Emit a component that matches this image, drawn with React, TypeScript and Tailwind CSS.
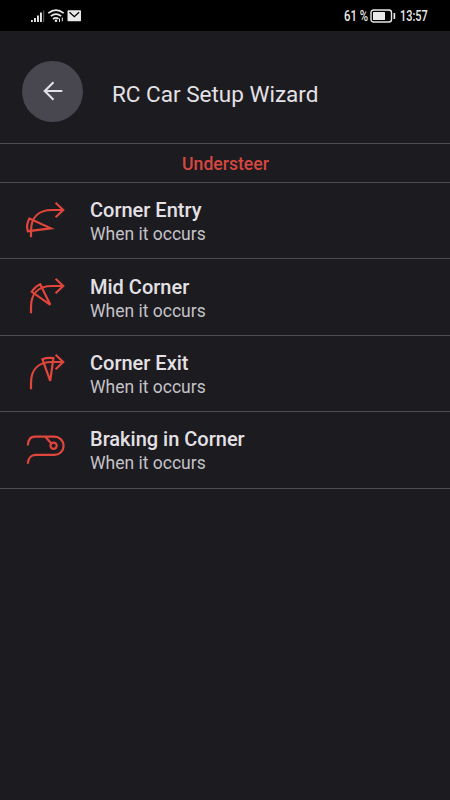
import type { ReactNode } from "react";

interface Option {
  title: string;
  icon: ReactNode;
}

const arrow = (
  <>
    <path d="M10 40.3V34C10 20.5 17.5 13 31 13H41.8" />
    <path d="M34.6 5.8l7.6 7.2-7.6 7.2" />
  </>
);

const OPTIONS: Option[] = [
  {
    title: "Corner Entry",
    icon: (
      <>
        {arrow}
        <path d="M8.4 21.6L29.8 31.3 6.8 34.2C5.5 30 6.2 25.4 8.4 21.6z" />
      </>
    ),
  },
  {
    title: "Mid Corner",
    icon: (
      <>
        {arrow}
        <path d="M19.2 11.2L29.3 31.8 10.8 18.8C13 15.2 15.5 12.8 19.2 11.2z" />
      </>
    ),
  },
  {
    title: "Corner Exit",
    icon: (
      <>
        {arrow}
        <path d="M21.4 10.2C25 8.8 28.7 8.6 32.4 9.2L29.2 31.8z" />
      </>
    ),
  },
  {
    title: "Braking in Corner",
    icon: (
      <>
        <path d="M6.8 19.5C7 14.3 9.5 10.7 14 10.7H33.5a9.1 9.1 0 0 1 0 18.2H14.5C10 28.9 7 32.5 6.8 37.8" />
        <path d="M24.5 11l5.6 6.3" />
        <circle cx="32.6" cy="19.7" r="3.1" />
      </>
    ),
  },
];

function StatusBar() {
  return (
    <div className="flex h-[31px] shrink-0 items-center justify-between bg-black pr-[23px] pl-[31px] text-[#e8e8e8]">
      <svg width="51" height="16" viewBox="0 0 51 16" fill="currentColor" aria-hidden="true">
        <path d="M0 12h1.8v2H0zM3 10h1.9v4H3zM6 7.5h1.9V14H6zM9 4.5h1.9V14H9z" />
        <path d="M12 2.5h1.3V14H12z" opacity=".35" />
        <g fill="none" stroke="currentColor" strokeWidth="1.7">
          <path d="M17.3 5.2Q25 -1 32.7 5.2" />
          <path d="M19.8 8.2Q25 4 30.2 8.2" />
          <path d="M22 11Q25 8.7 27.5 10.8" />
        </g>
        <circle cx="25" cy="12.8" r="1.3" />
        <path d="M28 10.5h1V14h-1zM30.8 9.5h1v3.8h-1z" />
        <rect x="36.5" y="2.3" width="13.5" height="11" rx=".8" />
        <path d="M38.5 4.2l4.8 4.5 4.8-4.5" fill="none" stroke="#000" strokeWidth="1.3" />
      </svg>
      <div className="flex items-center text-[14px] leading-4 font-medium whitespace-nowrap">
        <span className="mt-px w-[24px] origin-left scale-x-[0.81]">61 %</span>
        <svg className="mr-[4px] ml-[2px]" width="26" height="14" viewBox="0 0 26 14" fill="currentColor" aria-hidden="true">
          <rect x="1" y="1" width="20.5" height="12" rx="2.5" fill="none" stroke="currentColor" strokeWidth="1.4" />
          <rect x="3" y="3" width="12" height="8" rx=".5" />
          <rect x="23.5" y="4" width="1.7" height="6" rx=".5" />
        </svg>
        <span className="mt-px w-[27px] origin-left scale-x-[0.78]">13:57</span>
      </div>
    </div>
  );
}

export default function App() {
  return (
    <div className="flex h-screen w-full flex-col overflow-hidden bg-[#1c1b20] font-[Roboto,sans-serif] text-[#e4e1e6]">
      <StatusBar />
      <header className="flex h-[112px] shrink-0 items-center pl-[22px]">
        <button aria-label="Back" className="mt-[8px] flex size-[61px] items-center justify-center rounded-full bg-[#48464f]">
          <svg width="20" height="20" viewBox="0 0 20 20" fill="none" stroke="currentColor" strokeWidth="2.1" aria-hidden="true">
            <path d="M19.3 10H2M10.5 1.2L1.7 10l8.8 8.8" />
          </svg>
        </button>
        <h1 className="mt-[14px] ml-[29px] text-[22.5px] leading-7">RC Car Setup Wizard</h1>
      </header>
      <h2 className="flex h-[40px] shrink-0 items-center justify-center border-y border-[#4d4c51] pt-[2px] pl-[1px] text-[17.6px] font-medium text-[#d7473f]">
        Understeer
      </h2>
      <main>
        {OPTIONS.map(o => (
          <button key={o.title} className="flex h-[76.4px] w-full items-center border-b border-[#4d4c51] pl-[21px] text-left">
            <svg width="48" height="48" viewBox="0 0 48 48" fill="none" stroke="#e0463c" strokeWidth="2.2" aria-hidden="true">
              {o.icon}
            </svg>
            <div className="mt-[3px] ml-[21px]">
              <div className="text-[20px] leading-6 font-medium">{o.title}</div>
              <div className="text-[17.5px] leading-6 text-[#c4c2c8]">When it occurs</div>
            </div>
          </button>
        ))}
      </main>
    </div>
  );
}
